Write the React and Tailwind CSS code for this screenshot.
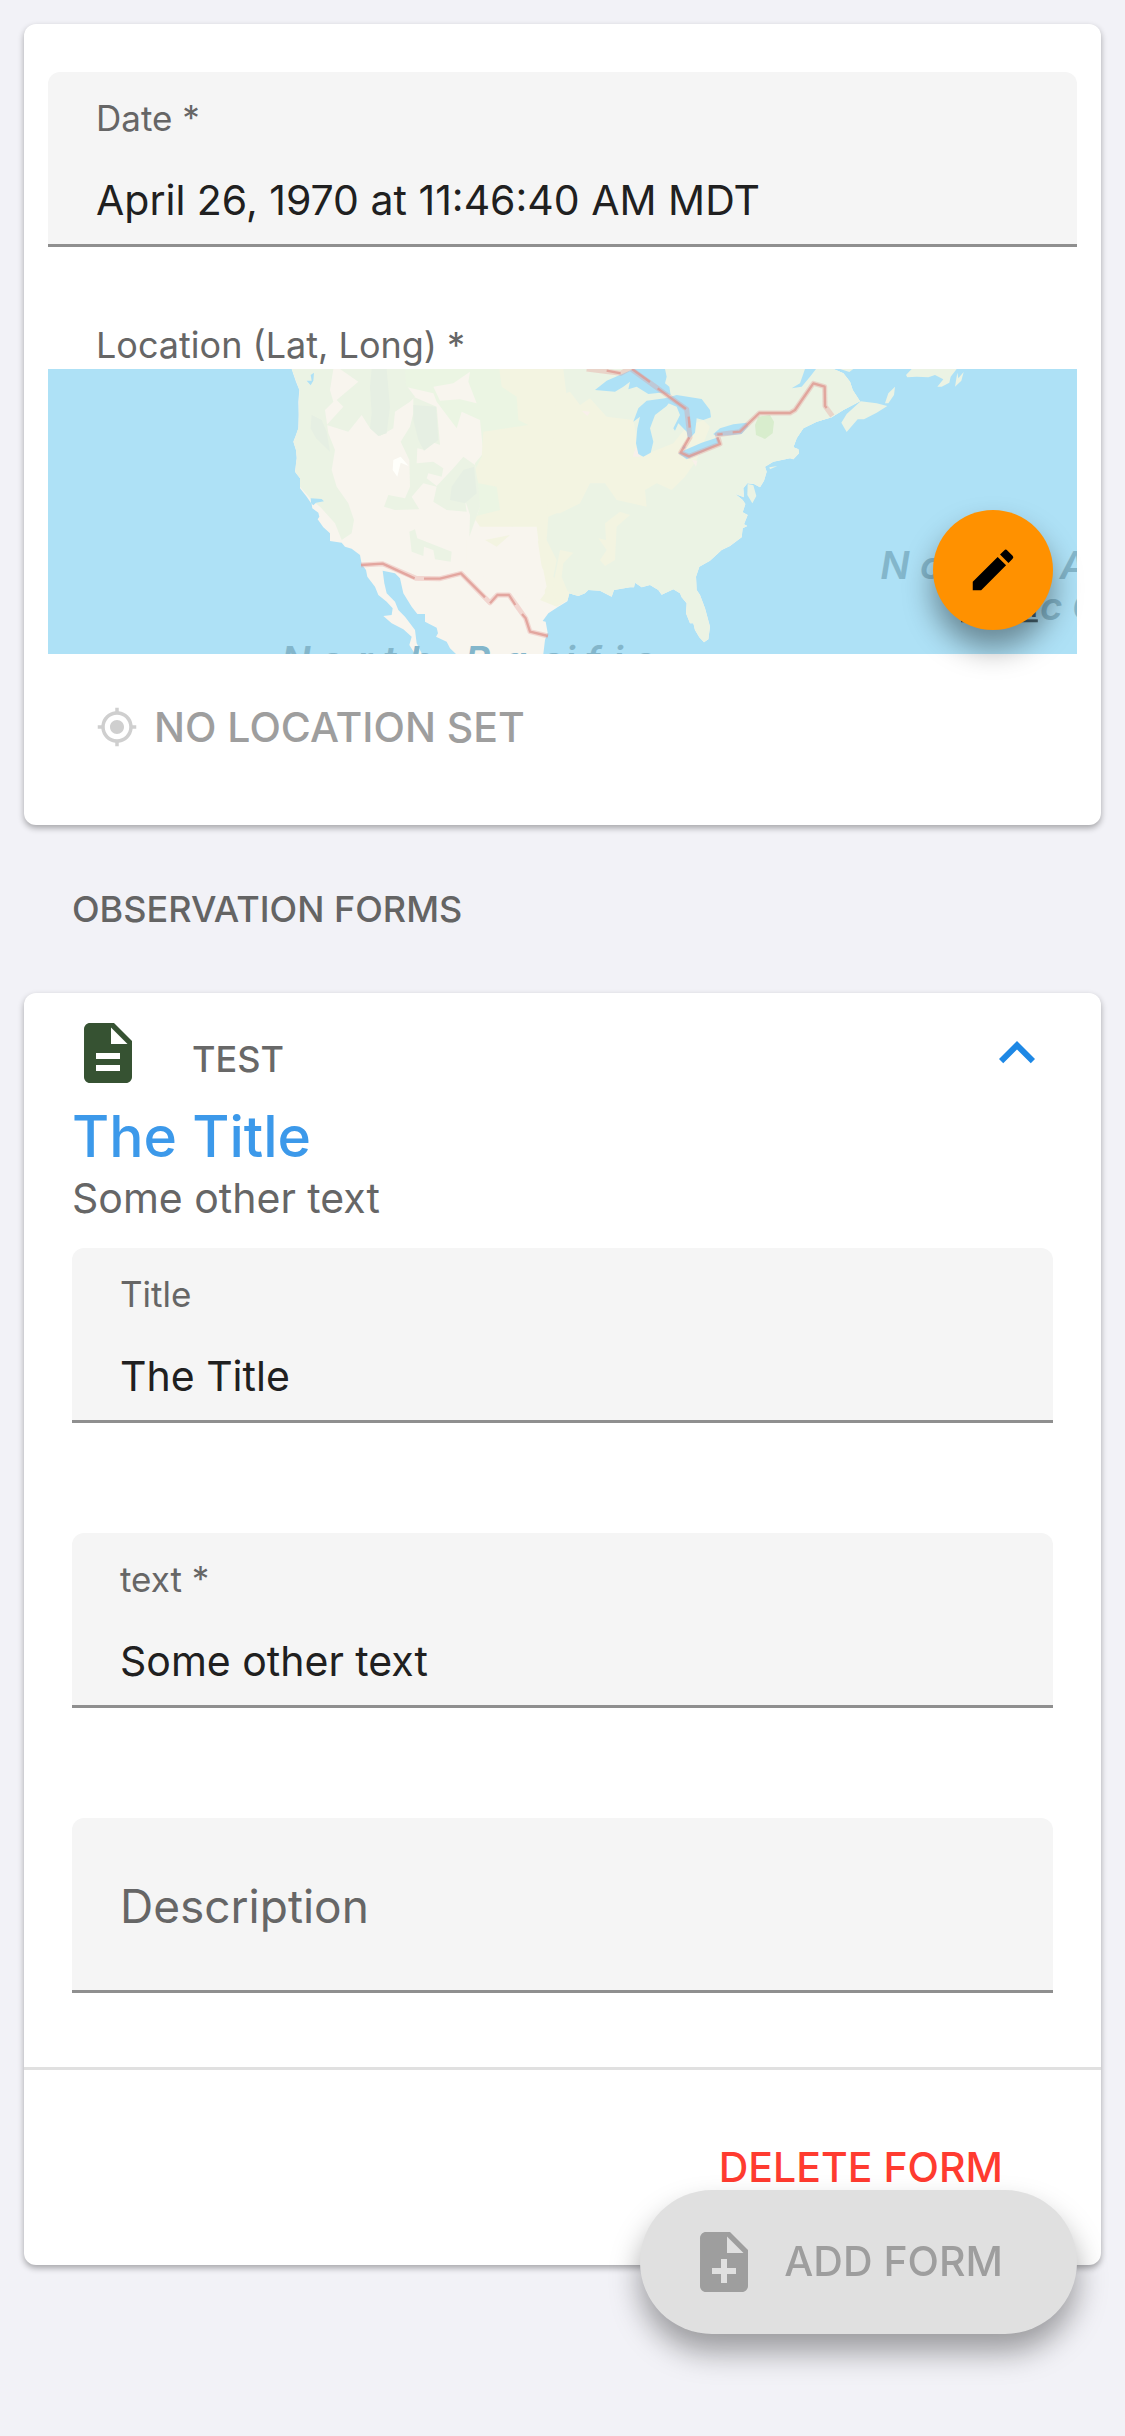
import React, { useState } from "react";
import { MdDescription, MdEdit, MdExpandLess, MdMyLocation, MdNoteAdd } from "react-icons/md";

const LAND =
  "M35 27L40 42L48 65L58 90L55 125L56 165L55 205L48 225L40 245L48 270L50 295L45 335L60 355L60 385L80 410L95 432L97 445L115 458L118 470L113 478L130 502L150 520L150 543L185 548L195 560L215 566L240 585L245 612L258 630L262 650L285 680L295 705L320 725L338 745L335 765L310 768L335 790L370 808L395 830L388 855L405 882L426 882L410 850L405 810L375 770L355 750L345 725L320 700L313 670L308 632L345 640L360 655L370 700L395 740L412 762L435 762L435 785L470 803L474 820L468 830L500 845L510 865L528 882L790 882L795 840L803 818L797 785L788 783L805 760L835 740L840 737L862 724L868 700L895 708L915 700L925 690L960 692L995 710L1002 690L1050 682L1062 682L1065 668L1085 682L1110 675L1135 690L1145 704L1180 688L1200 700L1205 712L1220 730L1218 760L1230 790L1240 790L1245 810L1258 832L1272 847L1285 838L1290 800L1275 745L1260 705L1250 690L1248 650L1258 620L1290 602L1325 570L1350 558L1385 532L1388 505L1402 498L1392 493L1403 465L1388 457L1396 432L1388 420L1366 402L1392 412L1390 385L1402 370L1422 372L1440 382L1452 362L1460 335L1455 320L1480 305L1530 295L1540 298L1557 280L1555 268L1540 262L1550 235L1570 205L1610 185L1655 172L1690 150L1740 124L1718 90L1710 65L1690 40L1660 27Z";

const LAKES = [
  "M945 90L980 62L1035 38L1060 27L1155 27L1160 50L1155 70L1168 80L1172 105L1140 98L1105 102L1070 80L1045 88L1050 65L1030 80L1005 95Z",
  "M1060 185L1075 145L1100 122L1155 115L1175 118L1160 138L1125 165L1110 205L1120 245L1112 278L1090 290L1075 282L1068 250L1072 205L1080 170Z",
  "M1155 115L1190 105L1265 117L1290 150L1293 172L1270 180L1250 175L1245 218L1225 240L1220 215L1195 190L1185 212L1180 205L1200 165L1190 140L1165 130Z",
  "M1195 280L1220 268L1265 248L1315 232L1318 250L1270 275L1220 298Z",
  "M1300 222L1320 205L1360 193L1400 188L1405 198L1385 222L1350 226L1308 228Z",
  "M1210 255L1218 262L1212 268L1206 264Z",
  "M1535 85L1560 70L1575 27L1608 27L1590 50L1565 80Z",
  "M1392 385L1402 380L1402 415L1412 430L1406 442L1398 430Z",
  "M80 62L95 62L92 45L102 38L100 62L92 76Z",
  "M92 415L125 417L132 424L108 428L100 436L93 430Z",
];

const EAST_GREEN =
  "M375 27L375 80L460 100L470 125L530 205L545 155L600 180L610 280L585 310L590 380L600 440L570 525L590 470L700 500L770 520L800 460L900 440L960 440L1000 400L1100 370L1200 340L1300 330L1500 300L1800 180L1800 27Z";

const SOFT_GREENS = [
  "M35 27L160 27L150 90L160 125L135 150L145 220L165 270L155 330L170 380L205 430L222 480L215 520L185 540L165 490L120 440L95 420L60 380L45 335L50 290L40 245L55 200L58 90Z",
  "M180 27L375 27L378 75L405 110L390 125L345 155L340 205L300 228L270 205L245 165L205 215L140 195L190 140L170 120L235 65Z",
  "M400 110L470 140L480 255L455 245L435 270L412 265L410 310L460 305L490 325L485 350L445 340L440 355L470 378L520 325L550 290L585 315L595 380L600 440L568 530L570 465L555 420L560 455L500 450L460 425L470 380L430 370L395 410L418 448L345 450L312 440L325 405L375 415L390 380L388 300L362 245L390 200L400 160Z",
  "M388 515L405 508L412 535L515 575L512 605L465 598L460 570L432 560L430 588L395 575Z",
];

const DEEP_GREENS = [
  "M275 27L320 27L330 140L320 220L295 228L270 205L275 160L270 80Z",
  "M400 135L468 140L475 240L432 272L415 240L400 180Z",
  "M515 380L550 330L582 320L590 400L555 430L510 420Z",
  "M95 165L125 180L140 215L150 275L108 235L92 205Z",
];

function LocationMap() {
  return (
    <svg
      viewBox="-696 27 3087 855"
      preserveAspectRatio="xMidYMid slice"
      className="block h-[285px] w-full"
      role="img"
      aria-label="Map of North America"
    >
      <defs>
        <clipPath id="land">
          <path d={LAND} />
        </clipPath>
      </defs>
      <rect x="-3000" y="27" width="8000" height="855" fill="#aee1f6" />
      <path d={LAND} fill="#f8f5ee" />
      <g clipPath="url(#land)">
        <path d={EAST_GREEN} fill="#ebf5e3" />
        <path d="M460 80L520 70L570 35L565 65L590 130L540 118L480 122Z" fill="#f8f5ee" />
        <path
          d="M658 27L665 80L710 110L715 180L745 195L610 215L605 290L585 330L595 370L650 380L660 450L580 470L600 500L700 500L770 520L785 620L795 700L780 720L830 740L900 700L900 27Z"
          fill="#f3f4e1"
        />
        <path d="M600 500L640 508L700 500L770 500L775 540L765 580L790 630L800 680L775 725L700 700L560 620L560 540Z" fill="#f8f5ee" />
        <path
          d="M850 27L1900 27L1900 900L860 900L870 700L820 650L830 600L800 540L805 470L900 430Z"
          fill="#ebf3e4"
        />
        <path
          d="M830 110L870 95L900 135L930 115L980 170L1060 180L1080 290L1180 250L1220 200L1270 180L1290 200L1270 250L1250 300L1215 350L1175 390L1130 370L1095 390L1100 440L1010 420L975 370L930 370L900 430L840 460L800 460Z"
          fill="#f3f4e1"
        />
        <path
          d="M1020 455L1050 465L1010 500L1005 600L975 618L960 600L980 570L955 535L978 540L975 490Z"
          fill="#f3f4e1"
        />
        <path d="M840 570L880 578L850 610L845 650L865 700L840 737L815 700Z" fill="#f3f4e1" />
        <path d="M615 540L690 525L650 560Z" fill="#f3f4e1" />
        {SOFT_GREENS.map((d) => (
          <path key={d} d={d} fill="#ebf3e4" />
        ))}
        {DEEP_GREENS.map((d) => (
          <path key={d} d={d} fill="#e6efe3" />
        ))}
        <path d="M340 300L362 290L386 318L362 308L352 350L338 330Z" fill="#fffffb" />
        <path d="M905 152L930 155L922 168ZM1068 262L1082 290L1058 290ZM1236 300L1252 302L1248 320Z" fill="#f8f0ea" />
        <path d="M1435 170L1470 165L1482 185L1478 220L1455 237L1428 225L1425 195Z" fill="#d8edcd" />
      </g>
      {LAKES.map((d) => (
        <path key={d} d={d} fill="#aee1f6" />
      ))}
      <path
        d="M1403 372L1420 376L1429 408L1417 430L1402 405ZM1468 322L1492 318L1470 328ZM1684 188L1700 162L1742 124L1790 130L1822 138L1790 158L1752 178L1733 178L1700 216ZM1815 130L1825 100L1845 80L1842 105L1825 130ZM1878 45L1895 27L2030 27L2012 50L2008 68L1985 80L1972 80L1990 58L1965 45L1945 52L1910 50L1882 52ZM2025 80L2032 38L2035 55L2051 36L2044 62ZM1680 27L1720 27L1708 36Z"
        fill="#ebf3e4"
      />
      <g fill="none" strokeLinejoin="round">
        <g stroke="#e58f8a" strokeOpacity=".3" strokeWidth="15">
          <path d="M243 615L308 611L408 655L480 656L543 640L630 728L652 705L687 705L737 775L750 815L804 828" />
          <path d="M920 27L1022 40L1050 25L1220 148L1230 232L1202 278L1227 289L1320 252L1312 224L1380 215L1438 159L1530 159L1545 150L1600 70L1634 80L1635 138L1657 168" />
        </g>
        <g stroke="#df9a92" strokeOpacity=".8" strokeWidth="7">
          <path d="M243 615L308 611L404 655M432 656L480 656L543 640L615 712M630 730L652 705L687 705L706 735M726 762L737 775L750 815L804 828" />
          <path d="M980 32L1022 40M1056 27L1110 66M1133 85L1218 147M1226 170L1229 203M1228 232L1202 278L1227 289L1320 252L1312 232M1312 224L1328 222M1358 217L1380 215L1438 159L1530 159L1545 150L1600 70L1634 80L1635 138L1640 144" />
        </g>
      </g>
      <g
        fill="#83b6cb"
        fontFamily="Inter, 'Liberation Sans', sans-serif"
        fontStyle="italic"
        fontWeight="600"
        fontSize="116"
      >
        <text x="4 120 230 308 388 555 668 782 854 914 998 1058" y="942">
          NorthPacific
        </text>
        <text x="1801 1920 2010 2080 2140 2339" y="657">
          NorthA
        </text>
        <text x="2280 2376" y="781">
          cO
        </text>
      </g>
      <text
        x="2043"
        y="772"
        fontFamily="Inter, 'Liberation Sans', sans-serif"
        fontWeight="600"
        fontSize="88"
        fill="#46626e"
        textDecoration="underline"
      >
        Legal
      </text>
    </svg>
  );
}

function Field({ id, label, defaultValue }) {
  return (
    <div className="rounded-t-xl border-b-3 border-[#8f8f8f] bg-[#f5f5f5] px-12 pt-6 pb-3.5">
      <label htmlFor={id} className="block text-[35px] leading-[44px] text-[#666666]">
        {label}
      </label>
      <input
        id={id}
        defaultValue={defaultValue}
        className="mt-8 block h-[58px] w-full bg-transparent text-[41px] text-[#202020] outline-none"
      />
    </div>
  );
}

export default function App() {
  const [open, setOpen] = useState(true);
  return (
    <main className="min-h-screen bg-[#f2f2f7] p-6 font-['Inter','Liberation_Sans',sans-serif]">
      <section className="rounded-xl bg-white px-6 pt-12 pb-[73px] shadow-[0_3px_6px_rgba(0,0,0,0.32)]">
        <Field id="date" label="Date *" defaultValue="April 26, 1970 at 11:46:40 AM MDT" />
        <div className="mt-[76px] mb-0.5 px-12 text-[36px] leading-[44px] text-[#666666]">
          Location (Lat, Long) *
        </div>
        <div className="relative">
          <LocationMap />
          <button
            type="button"
            aria-label="Edit location"
            className="absolute right-6 bottom-6 flex size-[120px] items-center justify-center rounded-full bg-[#ff9100] text-black shadow-[0_18px_30px_rgba(0,0,0,0.4)]"
          >
            <MdEdit className="size-[54px]" />
          </button>
        </div>
        <button
          type="button"
          disabled
          className="mt-12 ml-12 flex items-center gap-4 text-[41px] leading-[50px] font-medium text-[#9e9e9e]"
        >
          <MdMyLocation className="size-[42px] text-[#cfcfcf]" />
          NO LOCATION SET
        </button>
      </section>

      <h2 className="px-12 py-[62px] text-[36px] leading-[44px] font-medium text-[#646464]">
        OBSERVATION FORMS
      </h2>

      <section className="rounded-xl bg-white shadow-[0_3px_6px_rgba(0,0,0,0.32)]">
        <div className="px-12 pt-6 pb-[74px]">
          <header className="flex h-[72px] items-center">
            <MdDescription className="size-[72px] text-[#365232]" />
            <h3 className="mt-3 ml-12 flex-1 text-[36px] leading-[44px] font-medium text-[#686868]">TEST</h3>
            <button type="button" aria-label="Collapse form" aria-expanded={open} onClick={() => setOpen(!open)}>
              <MdExpandLess className="size-[72px] text-[#1e88e5]" />
            </button>
          </header>
          <p className="mt-3 text-[57px] leading-[72px] font-medium text-[#3c99ea]">The Title</p>
          <p className="text-[41px] leading-[50px] text-[#666666]">Some other text</p>
          {open && (
            <div className="mt-[25px] flex flex-col gap-[110px]">
              <Field id="title" label="Title" defaultValue="The Title" />
              <Field id="text" label="text *" defaultValue="Some other text" />
              <input
                aria-label="Description"
                placeholder="Description"
                className="h-[175px] w-full rounded-t-xl border-b-3 border-[#8f8f8f] bg-[#f5f5f5] px-12 pt-1 text-[46px] text-[#202020] outline-none placeholder:text-[#666666] placeholder:opacity-100"
              />
            </div>
          )}
        </div>
        <footer className="flex justify-end border-t-3 border-[#e0e0e0] px-[98px] pt-[72px] pb-[73px]">
          <button type="button" className="text-[41px] leading-[50px] font-medium text-[#ff3b30]">
            DELETE FORM
          </button>
        </footer>
      </section>

      <button
        type="button"
        disabled
        className="fixed right-12 bottom-[102px] flex h-36 items-center gap-6 rounded-full bg-[#e0e0e0] pr-[74px] pl-12 text-[41px] font-medium text-[#9e9e9e] shadow-[0_18px_30px_rgba(0,0,0,0.36)]"
      >
        <MdNoteAdd className="size-[72px]" />
        ADD FORM
      </button>
    </main>
  );
}
